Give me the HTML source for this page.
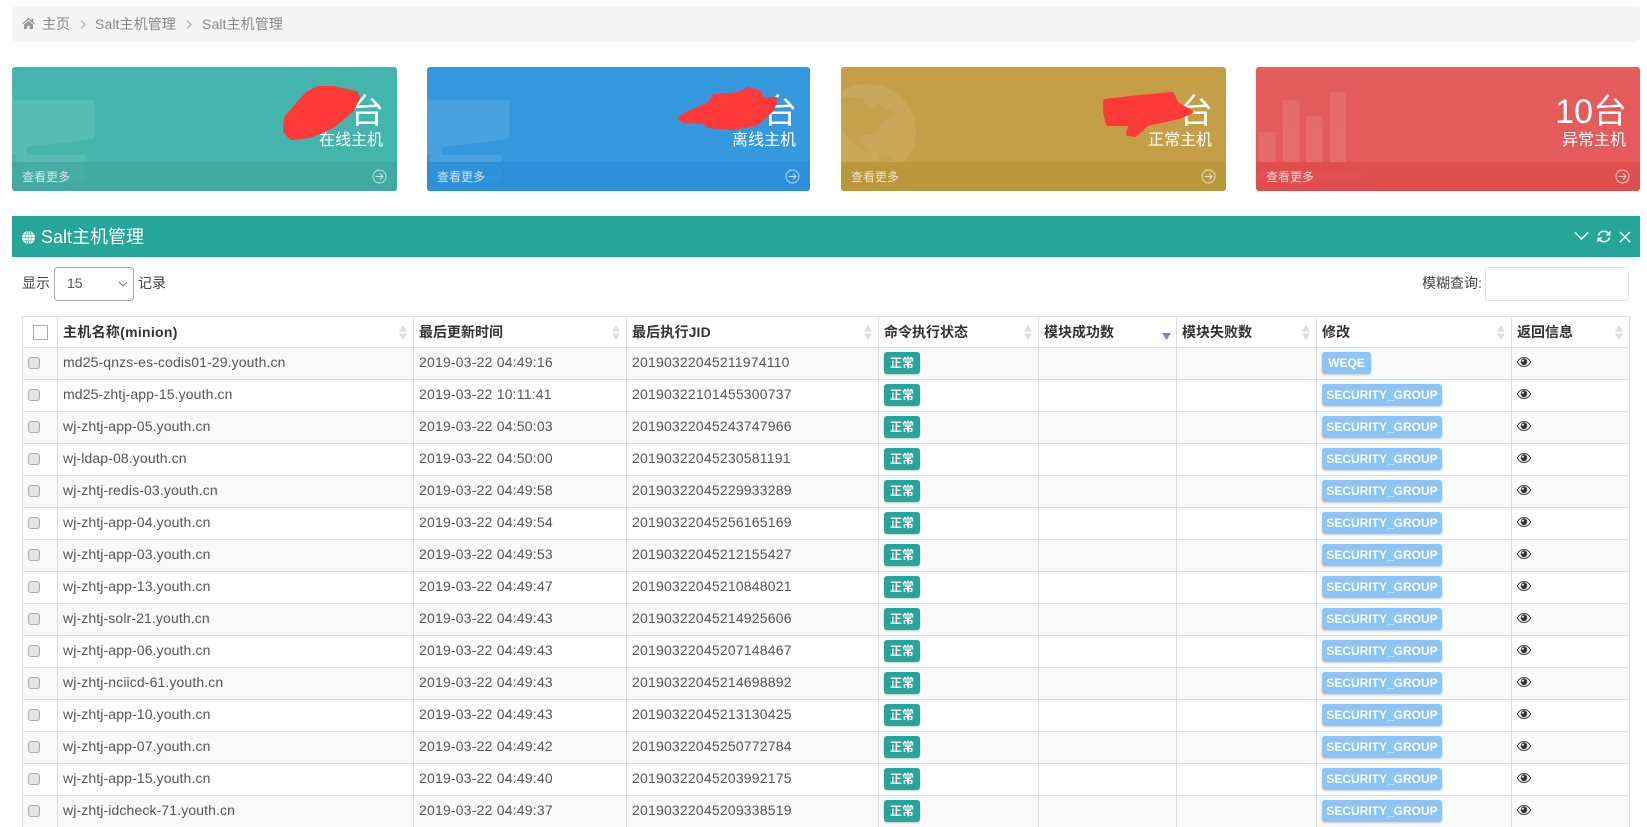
<!DOCTYPE html>
<html lang="zh-CN">
<head>
<meta charset="utf-8">
<title>Salt主机管理</title>
<style>
html,body{margin:0;padding:0;background:#fff;width:1647px;height:827px;overflow:hidden}
body{font-family:"Liberation Sans","Noto Sans CJK SC",sans-serif;font-size:14px;color:#555;position:relative}
*{box-sizing:border-box}
.crumb{position:absolute;left:12px;top:6px;width:1628px;height:36px;background:#f5f5f5;border-radius:4px;color:#888;line-height:37px}
.crumb span{position:absolute;top:0;white-space:nowrap}
.card{position:absolute;top:67px;height:124px;border-radius:3px;overflow:hidden;color:#fff}
.card svg.bg{position:absolute;left:0;top:0}
.card .foot{position:absolute;left:0;right:0;bottom:0;height:29px}
.card .more{position:absolute;left:10px;bottom:5px;font-size:12px;line-height:17px;opacity:.75}
.card .arrow{position:absolute;right:10px;bottom:7px;opacity:.75}
.card .num{position:absolute;right:13px;top:24px;font-size:34px;line-height:42px;white-space:nowrap}
.card .lab{position:absolute;right:14px;top:64px;font-size:16px;line-height:20px;white-space:nowrap}
.head{position:absolute;left:12px;top:216px;width:1628px;height:41px;background:#26a69a;color:#fff}
.head .t{position:absolute;left:29px;top:1px;font-size:18px;line-height:41px}
.lbl{position:absolute;top:273px;line-height:20px;color:#444;white-space:nowrap}
.sel{position:absolute;left:54px;top:267px;width:80px;height:34px;border:1px solid #aaa;border-radius:4px;padding-left:12px;line-height:31px;color:#555;font-size:14px}
.inp{position:absolute;left:1485px;top:267px;width:144px;height:34px;border:1px solid #e5e5e5;border-radius:2px}
table{position:absolute;left:22px;top:316px;width:1607px;table-layout:fixed;border-collapse:collapse}
th,td{border:1px solid #ddd;padding:0 0 0 5px;white-space:nowrap;overflow:hidden;position:relative;text-align:left}
th{height:31px;color:#333;font-weight:bold;font-size:14px;background:#fff}
td{height:32px;color:#555;letter-spacing:.12px;padding-bottom:3px}
td.j,td.d{letter-spacing:.2px}
tbody tr:nth-child(odd) td{background:#f9f9f9}
.sort{position:absolute;right:6px;top:8px}
.cb{display:block;position:relative;top:1px;width:12px;height:12px;margin-left:0;border:1px solid #aaa;border-radius:3px;background:#e6e6e6}
.hcb{display:block;width:15px;height:15px;margin-left:5px;border:1px solid #aaa;background:#fff}
.b{display:inline-block;position:relative;top:1px;height:22px;line-height:22px;border-radius:3px;color:#fff;font-weight:bold;font-size:12px;padding:0 6px;letter-spacing:0;box-shadow:0 1px 2px rgba(0,0,0,.2);vertical-align:middle}
.g{background:#26a69a;width:36px;padding:0;text-align:center}
.s{background:#8bc4f6;width:120px;padding:0;text-align:center}
.w{background:#8bc4f6;width:49px;padding:0;text-align:center}
.eye{display:block}
</style>
</head>
<body>
<svg width="0" height="0" style="position:absolute">
<defs>
<symbol id="sort" viewBox="0 0 8 15"><path d="M4 0L8 6.500H0Z M0 8.500H8L4 15Z" fill="#ddd"/></symbol>
<symbol id="eye" viewBox="0 0 14 10"><path d="M0.300 5C2 2 4.300 0.500 7 0.500S12 2 13.700 5C12 8 9.700 9.500 7 9.500S2 8 0.300 5Z" fill="#fff" stroke="#333" stroke-width="1"/><circle cx="7" cy="4.800" r="3.300" fill="#333"/><circle cx="5.800" cy="3.700" r="1" fill="#fff"/></symbol>
<symbol id="arr" viewBox="0 0 15 15"><circle cx="7.500" cy="7.500" r="6.500" fill="none" stroke="#fff" stroke-width=".9"/><path d="M3.500 7.500H11M8 4.500L11 7.500L8 10.500" fill="none" stroke="#fff" stroke-width=".9"/></symbol>
</defs>
</svg>

<div class="crumb">
<svg style="position:absolute;left:10px;top:12px" width="13" height="11" viewBox="0 0 13 11"><path d="M6.500 0L13 5.500L12.200 6.400L6.500 1.700L0.800 6.400L0 5.500ZM2 6.500L6.500 2.800L11 6.500V11H7.800V7.700H5.200V11H2Z" fill="#999"/><rect x="9.500" y="0.500" width="1.800" height="3" fill="#999"/></svg>
<span style="left:30px">主页</span>
<svg style="position:absolute;left:68px;top:14px" width="6" height="9" viewBox="0 0 6 9"><path d="M1 0.500L5 4.500L1 8.500" fill="none" stroke="#aaa" stroke-width="1.200"/></svg>
<span style="left:83px;letter-spacing:.1px">Salt主机管理</span>
<svg style="position:absolute;left:174px;top:14px" width="6" height="9" viewBox="0 0 6 9"><path d="M1 0.500L5 4.500L1 8.500" fill="none" stroke="#aaa" stroke-width="1.200"/></svg>
<span style="left:190px;letter-spacing:.1px">Salt主机管理</span>
</div>

<div class="card" style="left:12px;width:385px;background:#44b5ad">
<svg class="bg" width="385" height="124"><path d="M0 26L3 33H79Q82.500 33 82.500 36V69Q82.500 72 79 72.500L15 80V88H0Z" fill="#fff" opacity=".1"/><rect x="4" y="88" width="71" height="8" rx="3" fill="#fff" opacity=".1"/></svg>
<div class="foot" style="background:#40aaa3"></div>
<svg class="bg" width="385" height="124"><rect x="10" y="97" width="65" height="18" rx="8" fill="#fff" opacity=".03"/></svg>
<div class="num">台</div><div class="lab">在线主机</div>
<div class="more">查看更多</div>
<svg class="arrow" width="15" height="15"><use href="#arr"/></svg>
</div>

<div class="card" style="left:427px;width:383px;background:#3598dc">
<svg class="bg" width="383" height="124"><path d="M0 26L3 33H79Q82.500 33 82.500 36V69Q82.500 72 79 72.500L15 80V88H0Z" fill="#fff" opacity=".1"/><rect x="3" y="88" width="72" height="8" rx="3" fill="#fff" opacity=".1"/></svg>
<div class="foot" style="background:#2b8fd9"></div>
<svg class="bg" width="383" height="124"><rect x="3" y="97" width="72" height="18" rx="8" fill="#fff" opacity=".03"/></svg>
<div class="num">台</div><div class="lab">离线主机</div>
<div class="more">查看更多</div>
<svg class="arrow" width="15" height="15"><use href="#arr"/></svg>
</div>

<div class="card" style="left:841px;width:385px;background:#c49f47">
<svg class="bg" width="385" height="124"><path d="M0 25C8 19 17 17 27 17C53 17 75 39 75 65C75 77 70 87 63 95H0Z" fill="#fff" opacity=".1"/><path d="M0 31L8 30H22L24 36L32 41L37 36L44 41L54 46L46 53L37 61L34 68H22L20 75L26 83L32 88L19 81L9 73L0 60Z" fill="#c6a24c"/><path d="M37 95L38 88L52 90L54 93L46 95Z" fill="#c6a24c"/></svg>
<div class="foot" style="background:#bc963b"></div>
<div class="num">台</div><div class="lab">正常主机</div>
<div class="more">查看更多</div>
<svg class="arrow" width="15" height="15"><use href="#arr"/></svg>
</div>

<div class="card" style="left:1256px;width:384px;background:#e35b5a">
<svg class="bg" width="384" height="124"><g fill="#fff" opacity=".1"><rect x="3" y="65" width="16.500" height="30"/><rect x="27" y="33" width="16.500" height="62"/><rect x="50" y="49" width="16.500" height="46"/><rect x="74" y="25" width="16" height="70"/></g></svg>
<div class="foot" style="background:#df4d4c"></div>
<svg class="bg" width="384" height="124"><rect x="3" y="104" width="103" height="8" fill="#fff" opacity=".03"/></svg>
<div class="num">10台</div><div class="lab">异常主机</div>
<div class="more">查看更多</div>
<svg class="arrow" width="15" height="15"><use href="#arr"/></svg>
</div>

<svg style="position:absolute;left:0;top:0" width="1647" height="200">
<g fill="#ff3838" stroke="#ff3838" stroke-width="4" stroke-linejoin="round" stroke-linecap="round">
<polygon points="318,88 333,88 356,93 358,98 352,110 333,126 310,136 291,138 285,131 286,118 298,104 308,93"/>
<polygon points="680,118 689,113 709,104 714,96 740,94 748,89 759,92 762,99 776,99 772,110 756,124 733,128 708,126 703,122 684,121"/>
<polygon points="1105,101 1130,98 1172,94 1177,104 1191,112 1179,117 1147,124 1135,135 1128,134 1131,124 1108,124 1105,113"/>
</g>
</svg>

<div class="head">
<svg style="position:absolute;left:10px;top:15px" width="13" height="13" viewBox="0 0 14 14"><circle cx="7" cy="7" r="7" fill="#fff"/><g fill="none" stroke="#26a69a" stroke-width=".7" opacity=".8"><ellipse cx="7" cy="7" rx="3" ry="7"/><path d="M0 7H14M1.500 3.500H12.500M1.500 10.500H12.500M7 0V14"/></g></svg>
<div class="t">Salt主机管理</div>
<svg style="position:absolute;left:1562px;top:15px" width="15" height="10" viewBox="0 0 15 10"><path d="M1 1.500L7.500 8L14 1.500" fill="none" stroke="#fff" stroke-width="1.500"/></svg>
<svg style="position:absolute;left:1585px;top:14px" width="14" height="13" viewBox="0 0 14 13"><path d="M1.500 5.500C2 3 4.200 1.300 7 1.300C9 1.300 10.500 2.200 11.500 3.500M12.500 7.500C12 10 9.800 11.700 7 11.700C5 11.700 3.500 10.800 2.500 9.500" fill="none" stroke="#fff" stroke-width="1.500"/><path d="M13.500 0.500V5.500H8.500ZM0.500 12.500V7.500H5.500Z" fill="#fff"/></svg>
<svg style="position:absolute;left:1607px;top:15px" width="12" height="12" viewBox="0 0 12 12"><path d="M1 1L11 11M11 1L1 11" fill="none" stroke="#fff" stroke-width="1.500"/></svg>
</div>

<div class="lbl" style="left:22px">显示</div>
<div class="sel">15<svg style="position:absolute;right:5px;top:13px" width="10" height="7" viewBox="0 0 10 7"><path d="M1 1L5 5L9 1" fill="none" stroke="#777" stroke-width="1.100"/></svg></div>
<div class="lbl" style="left:138px">记录</div>
<div class="lbl" style="left:1422px">模糊查询:</div>
<div class="inp"></div>

<table>
<colgroup><col style="width:35px"><col style="width:356px"><col style="width:213px"><col style="width:252px"><col style="width:160px"><col style="width:138px"><col style="width:140px"><col style="width:195px"><col style="width:118px"></colgroup>
<thead><tr>
<th><i class="hcb"></i></th>
<th style="letter-spacing:.29px">主机名称(minion)<svg class="sort" width="8" height="15"><use href="#sort"/></svg></th>
<th>最后更新时间<svg class="sort" width="8" height="15"><use href="#sort"/></svg></th>
<th style="letter-spacing:.15px">最后执行JID<svg class="sort" width="8" height="15"><use href="#sort"/></svg></th>
<th>命令执行状态<svg class="sort" width="8" height="15"><use href="#sort"/></svg></th>
<th>模块成功数<svg class="sort" style="right:5px" width="9" height="15" viewBox="0 0 9 15"><path d="M0 8H9L4.500 15Z" fill="#7b7fd6"/></svg></th>
<th>模块失败数<svg class="sort" width="8" height="15"><use href="#sort"/></svg></th>
<th>修改<svg class="sort" width="8" height="15"><use href="#sort"/></svg></th>
<th>返回信息<svg class="sort" width="8" height="15"><use href="#sort"/></svg></th>
</tr></thead>
<tbody>
<tr><td><i class="cb"></i></td><td>md25-qnzs-es-codis01-29.youth.cn</td><td class="d">2019-03-22 04:49:16</td><td class="j">20190322045211974110</td><td><span class="b g">正常</span></td><td></td><td></td><td><span class="b w">WEQE</span></td><td><svg class="eye" width="14" height="10"><use href="#eye"/></svg></td></tr>
<tr><td><i class="cb"></i></td><td>md25-zhtj-app-15.youth.cn</td><td class="d">2019-03-22 10:11:41</td><td class="j">20190322101455300737</td><td><span class="b g">正常</span></td><td></td><td></td><td><span class="b s">SECURITY_GROUP</span></td><td><svg class="eye" width="14" height="10"><use href="#eye"/></svg></td></tr>
<tr><td><i class="cb"></i></td><td>wj-zhtj-app-05.youth.cn</td><td class="d">2019-03-22 04:50:03</td><td class="j">20190322045243747966</td><td><span class="b g">正常</span></td><td></td><td></td><td><span class="b s">SECURITY_GROUP</span></td><td><svg class="eye" width="14" height="10"><use href="#eye"/></svg></td></tr>
<tr><td><i class="cb"></i></td><td>wj-ldap-08.youth.cn</td><td class="d">2019-03-22 04:50:00</td><td class="j">20190322045230581191</td><td><span class="b g">正常</span></td><td></td><td></td><td><span class="b s">SECURITY_GROUP</span></td><td><svg class="eye" width="14" height="10"><use href="#eye"/></svg></td></tr>
<tr><td><i class="cb"></i></td><td>wj-zhtj-redis-03.youth.cn</td><td class="d">2019-03-22 04:49:58</td><td class="j">20190322045229933289</td><td><span class="b g">正常</span></td><td></td><td></td><td><span class="b s">SECURITY_GROUP</span></td><td><svg class="eye" width="14" height="10"><use href="#eye"/></svg></td></tr>
<tr><td><i class="cb"></i></td><td>wj-zhtj-app-04.youth.cn</td><td class="d">2019-03-22 04:49:54</td><td class="j">20190322045256165169</td><td><span class="b g">正常</span></td><td></td><td></td><td><span class="b s">SECURITY_GROUP</span></td><td><svg class="eye" width="14" height="10"><use href="#eye"/></svg></td></tr>
<tr><td><i class="cb"></i></td><td>wj-zhtj-app-03.youth.cn</td><td class="d">2019-03-22 04:49:53</td><td class="j">20190322045212155427</td><td><span class="b g">正常</span></td><td></td><td></td><td><span class="b s">SECURITY_GROUP</span></td><td><svg class="eye" width="14" height="10"><use href="#eye"/></svg></td></tr>
<tr><td><i class="cb"></i></td><td>wj-zhtj-app-13.youth.cn</td><td class="d">2019-03-22 04:49:47</td><td class="j">20190322045210848021</td><td><span class="b g">正常</span></td><td></td><td></td><td><span class="b s">SECURITY_GROUP</span></td><td><svg class="eye" width="14" height="10"><use href="#eye"/></svg></td></tr>
<tr><td><i class="cb"></i></td><td>wj-zhtj-solr-21.youth.cn</td><td class="d">2019-03-22 04:49:43</td><td class="j">20190322045214925606</td><td><span class="b g">正常</span></td><td></td><td></td><td><span class="b s">SECURITY_GROUP</span></td><td><svg class="eye" width="14" height="10"><use href="#eye"/></svg></td></tr>
<tr><td><i class="cb"></i></td><td>wj-zhtj-app-06.youth.cn</td><td class="d">2019-03-22 04:49:43</td><td class="j">20190322045207148467</td><td><span class="b g">正常</span></td><td></td><td></td><td><span class="b s">SECURITY_GROUP</span></td><td><svg class="eye" width="14" height="10"><use href="#eye"/></svg></td></tr>
<tr><td><i class="cb"></i></td><td>wj-zhtj-nciicd-61.youth.cn</td><td class="d">2019-03-22 04:49:43</td><td class="j">20190322045214698892</td><td><span class="b g">正常</span></td><td></td><td></td><td><span class="b s">SECURITY_GROUP</span></td><td><svg class="eye" width="14" height="10"><use href="#eye"/></svg></td></tr>
<tr><td><i class="cb"></i></td><td>wj-zhtj-app-10.youth.cn</td><td class="d">2019-03-22 04:49:43</td><td class="j">20190322045213130425</td><td><span class="b g">正常</span></td><td></td><td></td><td><span class="b s">SECURITY_GROUP</span></td><td><svg class="eye" width="14" height="10"><use href="#eye"/></svg></td></tr>
<tr><td><i class="cb"></i></td><td>wj-zhtj-app-07.youth.cn</td><td class="d">2019-03-22 04:49:42</td><td class="j">20190322045250772784</td><td><span class="b g">正常</span></td><td></td><td></td><td><span class="b s">SECURITY_GROUP</span></td><td><svg class="eye" width="14" height="10"><use href="#eye"/></svg></td></tr>
<tr><td><i class="cb"></i></td><td>wj-zhtj-app-15.youth.cn</td><td class="d">2019-03-22 04:49:40</td><td class="j">20190322045203992175</td><td><span class="b g">正常</span></td><td></td><td></td><td><span class="b s">SECURITY_GROUP</span></td><td><svg class="eye" width="14" height="10"><use href="#eye"/></svg></td></tr>
<tr><td><i class="cb"></i></td><td>wj-zhtj-idcheck-71.youth.cn</td><td class="d">2019-03-22 04:49:37</td><td class="j">20190322045209338519</td><td><span class="b g">正常</span></td><td></td><td></td><td><span class="b s">SECURITY_GROUP</span></td><td><svg class="eye" width="14" height="10"><use href="#eye"/></svg></td></tr>
</tbody>
</table>
</body>
</html>
